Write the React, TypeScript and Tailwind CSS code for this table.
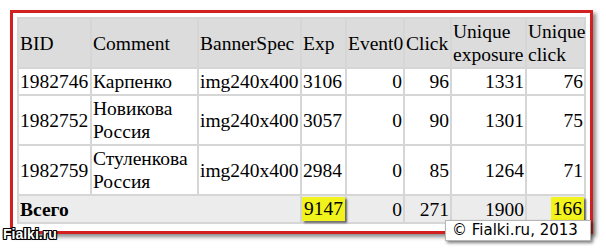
type Row = {
  bid: string
  comment: string
  spec: string
  exp: string
  ev: string
  click: string
  ue: string
  uc: string
}

const rows: Row[] = [
  { bid: "1982746", comment: "Карпенко", spec: "img240x400", exp: "3106", ev: "0", click: "96", ue: "1331", uc: "76" },
  { bid: "1982752", comment: "Новикова Россия", spec: "img240x400", exp: "3057", ev: "0", click: "90", ue: "1301", uc: "75" },
  { bid: "1982759", comment: "Стуленкова Россия", spec: "img240x400", exp: "2984", ev: "0", click: "85", ue: "1264", uc: "71" },
]

const cell = "bg-white px-[1px] py-[1px] align-middle"
const num = `${cell} text-right`
const head = "bg-[#dcdcdc] px-[1px] py-[1px] font-normal"
const total = "bg-[#ececec] px-[1px] py-[1px] text-right"

function Mark({ children }: { children: string }) {
  return (
    <span className="inline-block bg-[#f2f21c] px-[2px] leading-[24px] shadow-[2px_2px_2px_rgba(0,0,0,0.55)]">
      {children}
    </span>
  )
}

export default function App() {
  return (
    <div className="relative w-[606px] h-[249px] bg-white overflow-hidden">
      <div className="ml-[10px] mt-[10px] w-[583px] h-[224px] border-[3px] border-[#d22020] bg-white p-[4px] shadow-[3px_3px_4px_rgba(0,0,0,0.45)]">
        <table className="table-fixed w-[569px] border-separate border-spacing-[2px] bg-[#d6d6d6] text-black [font-family:Liberation_Serif,serif] text-[19.5px] leading-[23px]">
          <colgroup>
            <col className="w-[71px]" />
            <col className="w-[105px]" />
            <col className="w-[101px]" />
            <col className="w-[43px]" />
            <col className="w-[56px]" />
            <col className="w-[45px]" />
            <col className="w-[73px]" />
            <col className="w-[57px]" />
          </colgroup>
          <thead>
            <tr className="text-left">
              <th className={`${head} whitespace-nowrap`}>BID</th>
              <th className={`${head} whitespace-nowrap`}>Comment</th>
              <th className={`${head} whitespace-nowrap`}>BannerSpec</th>
              <th className={`${head} whitespace-nowrap`}>Exp</th>
              <th className={`${head} whitespace-nowrap`}>Event0</th>
              <th className={`${head} whitespace-nowrap`}>Click</th>
              <th className={head}>Unique exposure</th>
              <th className={head}>Unique click</th>
            </tr>
          </thead>
          <tbody>
            {rows.map((r) => (
              <tr key={r.bid}>
                <td className={cell}>{r.bid}</td>
                <td className={cell}>{r.comment}</td>
                <td className={`${cell} whitespace-nowrap`}>{r.spec}</td>
                <td className={cell}>{r.exp}</td>
                <td className={num}>{r.ev}</td>
                <td className={num}>{r.click}</td>
                <td className={num}>{r.ue}</td>
                <td className={num}>{r.uc}</td>
              </tr>
            ))}
            <tr>
              <td colSpan={3} className="bg-[#ececec] px-[1px] py-[1px] font-bold">Всего</td>
              <td className="bg-[#ececec] py-[1px] text-right">
                <Mark>9147</Mark>
              </td>
              <td className={total}>0</td>
              <td className={total}>271</td>
              <td className={total}>1900</td>
              <td className="bg-[#ececec] py-[1px] text-right">
                <Mark>166</Mark>
              </td>
            </tr>
          </tbody>
        </table>
      </div>

      {/* watermark */}
      <div className="absolute left-[3px] top-[226px] [font-family:Liberation_Sans,sans-serif] text-[14px] leading-[17px] font-bold text-white [text-shadow:-1px_0_0_#000,1px_0_0_#000,0_-1px_0_#000,0_1px_0_#000,1px_1px_0_#000,-1px_-1px_0_#000,1px_-1px_0_#000,-1px_1px_0_#000]">
        Fialki.ru
      </div>

      {/* copyright badge */}
      <div className="absolute left-[445px] top-[220px] w-[146px] h-[21px] bg-white border border-[#b5b5b5] pl-[6px] shadow-[2px_2px_3px_rgba(0,0,0,0.5)] [font-family:DejaVu_Sans,sans-serif] text-[15px] leading-[19px] text-black whitespace-nowrap">
        © Fialki.ru, 2013
      </div>
    </div>
  )
}
